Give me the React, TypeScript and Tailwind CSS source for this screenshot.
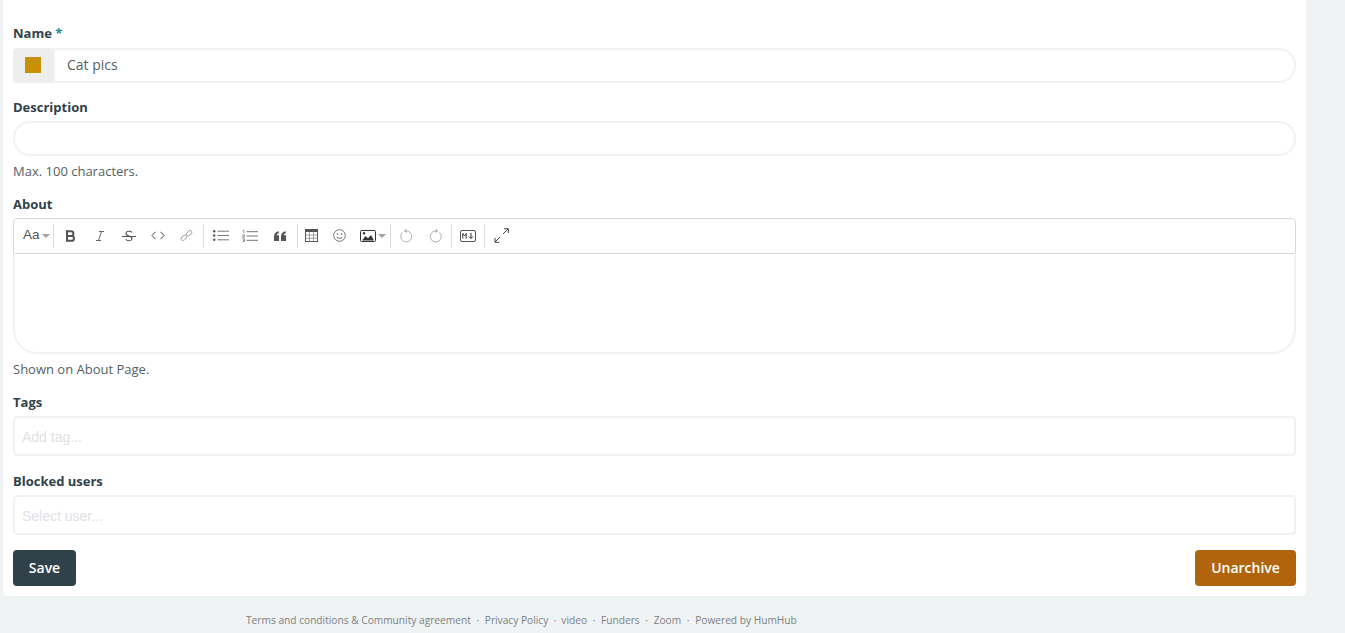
import React from "react";

function Label({ children, className = "" }: { children: React.ReactNode; className?: string }) {
  return <div className={`h-[18px] leading-[18px] text-[13px] font-bold text-[#31414a] ${className}`}>{children}</div>;
}
function Help({ children, className = "" }: { children: React.ReactNode; className?: string }) {
  return <div className={`h-[18px] leading-[18px] text-[13px] text-[#555f66] ${className}`}>{children}</div>;
}
function Sep({ className = "" }: { className?: string }) {
  return <span className={`w-px h-[24px] bg-[#dddddd] shrink-0 ${className}`} />;
}
function Btn({ w, className = "", children }: { w: number; className?: string; children: React.ReactNode }) {
  return <span className={`flex items-center justify-center h-[24px] shrink-0 ${className}`} style={{ width: w }}>{children}</span>;
}
function Caret({ className = "" }: { className?: string }) {
  return <svg width="8" height="4" viewBox="0 0 8 4" className={className}><path d="M0 0h8L4 4z" fill="#a0a0a0" /></svg>;
}

export default function App() {
  return (
    <div className="h-[633px] overflow-hidden bg-[#f0f3f4] font-['Open_Sans',sans-serif] text-[13px]">
      <div className="w-[1303px] h-[596px] ml-[3px] bg-white rounded-b-[4px] px-[10px] pt-[24px] flex flex-col">
        <Label>Name <span className="text-[#1a8a96]">*</span></Label>
        <div className="mt-[6px] h-[35px] flex">
          <div className="w-[40px] h-full bg-[#eeeeee] rounded-l-[4px] flex items-center justify-center shrink-0 pb-[1px]">
            <span className="w-[16px] h-[16px] bg-[#c98f07]" />
          </div>
          <div className="flex-1 border-2 border-[#f0f3f4] rounded-r-[17px] flex items-center pl-[12px] pb-[2px] text-[14px] text-[#555f66]">Cat pics</div>
        </div>
        <Label className="mt-[15px]">Description</Label>
        <div className="mt-[5px] h-[35px] border-2 border-[#f0f3f4] rounded-[17px]" />
        <Help className="mt-[6px]">Max. 100 characters.</Help>
        <Label className="mt-[15px]">About</Label>
        <div className="mt-[5px] h-[36px] border border-[#d9d9d9] rounded-t-[4px] flex items-center pb-[1px]">
          <Btn w={39} className="justify-start pl-[9px]">
            <span className="font-['Liberation_Sans',sans-serif] text-[13.5px] text-[#555] flex items-center">Aa<Caret className="ml-[2px]" /></span>
          </Btn>
          <Sep />
          <Btn w={29} className="ml-[2px]"><svg width="11" height="12" viewBox="0 0 11 12"><path d="M2 1.200h4a2.400 2.400 0 0 1 0 4.800H2zM2 6h4.600a2.400 2.400 0 0 1 0 4.800H2z" fill="none" stroke="#555" strokeWidth="2" /></svg></Btn>
          <Btn w={29}><svg width="10" height="12" viewBox="0 0 10 12"><path d="M4 1.500h5M1 10.500h5M6.500 1.500 3.500 10.500" fill="none" stroke="#666" strokeWidth="1" /></svg></Btn>
          <Btn w={29}><svg width="14" height="12" viewBox="0 0 14 12"><path d="M0 6.500h14" stroke="#555" strokeWidth="1" /><path d="M10 2.500C9 .8 4.500.8 4 3c-.3 1.600 1 2.500 3 3 2.200.6 3.300 1.400 3 3C9.600 11.300 5 11.300 3.800 9.300" fill="none" stroke="#555" strokeWidth="1.100" /></svg></Btn>
          <Btn w={29}><svg width="14" height="9" viewBox="0 0 14 9"><path d="M4.500 .8 1 4.500l3.500 3.700M9.500 .8 13 4.500 9.500 8.200" fill="none" stroke="#444" strokeWidth="1" /></svg></Btn>
          <Btn w={29}><svg width="13" height="13" viewBox="0 0 13 13"><g fill="none" stroke="#b0b0b0" strokeWidth="1"><rect x=".8" y="7" width="6.200" height="3.600" rx="1.800" transform="rotate(-45 3.900 8.800)" /><rect x="6" y="2.400" width="6.200" height="3.600" rx="1.800" transform="rotate(-45 9.100 4.200)" /></g></svg></Btn>
          <Sep className="ml-[2px]" />
          <Btn w={29} className="ml-[2px]"><svg width="16" height="11" viewBox="0 0 16 11"><g fill="#555"><circle cx="1.200" cy="1.200" r="1.200" /><circle cx="1.200" cy="5.500" r="1.200" /><circle cx="1.200" cy="9.800" r="1.200" /></g><path d="M4.500 1.200H16M4.500 5.500H16M4.500 9.800H16" stroke="#777" strokeWidth="1" /></svg></Btn>
          <Btn w={30}><svg width="16" height="12" viewBox="0 0 16 12"><path d="M4.500 1.700H16M4.500 6H16M4.500 10.300H16" stroke="#777" strokeWidth="1" /><path d="M.8.700 1.800.3V3M.5 4.800h2v1.300H.7v1.300h2M.5 8.800h2v2.700H.5M1 10.200h1.500" fill="none" stroke="#555" strokeWidth=".6" /></svg></Btn>
          <Btn w={30}><svg width="12" height="10" viewBox="0 0 11 9"><path d="M0 5C0 2.200 1.600.6 4.400.2V2C3.200 2.300 2.700 2.900 2.600 3.800h2V9H0zM6.400 5c0-2.800 1.600-4.400 4.400-4.800V2C9.600 2.300 9.100 2.900 9 3.800h2V9H6.400z" fill="#555" /></svg></Btn>
          <Sep className="ml-[2px]" />
          <Btn w={27}><svg width="13" height="13" viewBox="0 0 13 13"><rect x=".5" y=".5" width="12" height="12" fill="#fff" stroke="#555" /><rect x=".5" y=".5" width="12" height="2.500" fill="#555" /><path d="M.5 6h12M.5 9.300h12M4.500 3v9.500M8.500 3v9.500" stroke="#888" strokeWidth=".8" /></svg></Btn>
          <Btn w={28}><svg width="13" height="13" viewBox="0 0 13 13"><circle cx="6.500" cy="6.500" r="5.800" fill="none" stroke="#666" strokeWidth=".9" /><circle cx="4.500" cy="5" r=".8" fill="#555" /><circle cx="8.500" cy="5" r=".8" fill="#555" /><path d="M3.700 8c1.400 1.800 4.200 1.800 5.600 0" fill="none" stroke="#555" strokeWidth=".9" /></svg></Btn>
          <Btn w={37} className="justify-start pl-[7px]">
            <svg width="16" height="12" viewBox="0 0 16 12"><rect x=".5" y=".5" width="15" height="11" rx="1" fill="#fff" stroke="#333" /><path d="M2 10.500 5.500 6l2.500 2.300L11 5l3 5.500z" fill="#333" /><circle cx="4" cy="3.300" r="1.200" fill="#333" /></svg>
            <Caret className="ml-[2px]" />
          </Btn>
          <Sep />
          <Btn w={31}><svg width="13" height="15" viewBox="0 0 13 15"><path d="M2.500 4.500A5.500 5.500 0 1 0 6.500 3" fill="none" stroke="#b0b0b0" strokeWidth="1" /><path d="M6.500 .8 3.800 3 6.500 5z" fill="#b0b0b0" /></svg></Btn>
          <Btn w={27}><svg width="13" height="15" viewBox="0 0 13 15"><path d="M10.500 4.500A5.500 5.500 0 1 1 6.500 3" fill="none" stroke="#b0b0b0" strokeWidth="1" /><path d="M6.500 .8 9.200 3 6.500 5z" fill="#b0b0b0" /></svg></Btn>
          <Sep className="ml-[2px]" />
          <Btn w={32}><svg width="16" height="12" viewBox="0 0 16 12"><rect x=".5" y=".5" width="15" height="11" rx="1.500" fill="none" stroke="#555" /><path d="M2.800 8.500V3.500l1.700 2.300 1.700-2.300v5" fill="none" stroke="#333" strokeWidth="1" /><path d="M11 3v5.500M9 6.500l2 2 2-2" fill="none" stroke="#333" strokeWidth="1" /></svg></Btn>
          <Sep />
          <Btn w={32}><svg width="15" height="15" viewBox="0 0 15 15"><path d="M9 6l5-5M10 .7h4.300V5M6 9l-5 5M1 10v4.300h4.300" fill="none" stroke="#444" strokeWidth="1" /></svg></Btn>
        </div>
        <div className="h-[101px] -mt-px border-2 border-t-0 border-[#f0f3f4] rounded-b-[24px] shrink-0" />
        <Help className="mt-[6px]">Shown on About Page.</Help>
        <Label className="mt-[15px]">Tags</Label>
        <div className="mt-[5px] h-[40px] border-2 border-[#f0f3f4] rounded-[4px] flex items-center pl-[7px] pt-[2px] font-['Liberation_Sans',sans-serif] text-[14px] text-[#dde2e6]">Add tag...</div>
        <Label className="mt-[16px]">Blocked users</Label>
        <div className="mt-[5px] h-[40px] border-2 border-[#f0f3f4] rounded-[4px] flex items-center pl-[7px] pt-[2px] font-['Liberation_Sans',sans-serif] text-[14px] text-[#dde2e6]">Select user...</div>
        <div className="mt-[15px] flex justify-between">
          <button className="w-[63px] h-[36px] pb-[2px] rounded-[4px] bg-[#31414a] text-white text-[14px] font-semibold">Save</button>
          <button className="w-[101px] h-[36px] pb-[2px] rounded-[4px] bg-[#b0650d] text-white text-[14px] font-semibold">Unarchive</button>
        </div>
      </div>
      <div className="ml-[246px] mt-[16px] h-[17px] leading-[17px] text-[10.18px] text-[#7a7f83] flex whitespace-pre">
        <span>Terms and conditions &amp; Community agreement</span><span className="w-[14px] text-center">·</span>
        <span>Privacy Policy</span><span className="w-[13px] text-center">·</span>
        <span>video</span><span className="w-[14px] text-center">·</span>
        <span>Funders</span><span className="w-[14px] text-center">·</span>
        <span>Zoom</span><span className="w-[14px] text-center">·</span>
        <span>Powered by HumHub</span>
      </div>
    </div>
  );
}
